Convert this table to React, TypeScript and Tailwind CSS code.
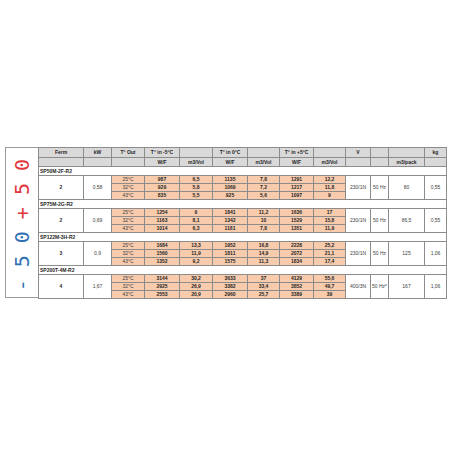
const blocks = [
  {
    name: "SP50M-2F-R2", ferm: "2", kw: "0,58", v: "230/1N", hz: "50 Hz", pack: "80", kg: "0,55",
    rows: [
      ["987", "6,5", "1135", "7,8", "1291", "12,2"],
      ["929", "5,8", "1069", "7,2", "1217", "11,8"],
      ["835", "5,5", "925", "5,6", "1097", "9"],
    ],
  },
  {
    name: "SP75M-2G-R2", ferm: "2", kw: "0,69", v: "230/1N", hz: "50 Hz", pack: "86,5", kg: "0,55",
    rows: [
      ["1254", "9", "1841", "11,2", "1636", "17"],
      ["1163", "8,1", "1342", "10", "1529", "15,8"],
      ["1014", "6,3", "1181", "7,8", "1351", "11,9"],
    ],
  },
  {
    name: "SP122M-3H-R2", ferm: "3", kw: "0,9", v: "230/1N", hz: "50 Hz", pack: "125", kg: "1,06",
    rows: [
      ["1684", "13,3", "1952", "16,8", "2228", "25,2"],
      ["1560", "11,9", "1811", "14,9", "2072", "21,1"],
      ["1352", "9,2", "1575", "11,3", "1834", "17,4"],
    ],
  },
  {
    name: "SP200T-4M-R2", ferm: "4", kw: "1,67", v: "400/3N", hz: "50 Hz*", pack: "167", kg: "1,06",
    rows: [
      ["3144", "30,2", "3633", "37", "4129", "55,6"],
      ["2925", "26,9", "3382", "33,4", "3852", "49,7"],
      ["2553", "20,9", "2960", "25,7", "3389", "39"],
    ],
  },
];

const temps = ["25°C", "32°C", "43°C"];
const widths = [45, 28, 33, 35, 33, 35, 32, 34, 32, 25, 18, 36, 22];

const hd = "border border-[#8c8c8c] bg-[#d9d9d9] text-[#262626] font-bold text-center p-0";
const cell = "border border-[#8c8c8c] text-center p-0";
const salmon = "border border-[#8c8c8c] bg-[#f8cbad] text-center p-0 text-[#262626]";

export default function App() {
  return (
    <div className="w-[450px] h-[450px] bg-white pt-[147px] pl-[5px] flex items-start font-['Liberation_Sans',Arial,sans-serif]">
      <div className="w-[33px] h-[151px] border border-[#9a9a9a] border-r-0 flex items-center justify-center">
        <div className="[writing-mode:vertical-rl] rotate-180 font-['DejaVu_Sans_Mono',monospace] text-[20px] leading-none tracking-[12px] pt-[6px]">
          <span className="text-[#2f6fb3]">-50</span>
          <span className="text-[#e0353c]">+50</span>
        </div>
      </div>
      <table className="table-fixed border-collapse w-[408px] text-[5px] leading-none border border-[#8c8c8c]">
        <colgroup>
          {widths.map((w, i) => (
            <col key={i} style={{ width: w }} />
          ))}
        </colgroup>
        <tbody>
          <tr className="h-[10px]">
            <td className={hd}>Ferm</td>
            <td className={hd}>kW</td>
            <td className={hd}>T° Out</td>
            <td className={hd}>T° in -5°C</td>
            <td className={hd}></td>
            <td className={hd}>T° in 0°C</td>
            <td className={hd}></td>
            <td className={hd}>T° in +5°C</td>
            <td className={hd}></td>
            <td className={hd}>V</td>
            <td className={hd}></td>
            <td className={hd}></td>
            <td className={hd}>kg</td>
          </tr>
          <tr className="h-[9px]">
            <td className={hd}></td>
            <td className={hd}></td>
            <td className={hd}></td>
            <td className={hd}>W/F</td>
            <td className={hd}>m3/Vol</td>
            <td className={hd}>W/F</td>
            <td className={hd}>m3/Vol</td>
            <td className={hd}>W/F</td>
            <td className={hd}>m3/Vol</td>
            <td className={hd}></td>
            <td className={hd}></td>
            <td className={hd}>m3/pack</td>
            <td className={hd}></td>
          </tr>
          {blocks.map((b) => [
            <tr key={b.name} className="h-[9px]">
              <td colSpan={13} className="p-0 pl-[1px] font-bold text-[#262626] border-b border-[#8c8c8c] border-l border-r">
                {b.name}
              </td>
            </tr>,
            ...b.rows.map((r, i) => (
              <tr key={b.name + i} className="h-[8px]">
                {i === 0 && (
                  <>
                    <td rowSpan={3} className={cell + " font-bold text-[#262626]"}>{b.ferm}</td>
                    <td rowSpan={3} className={cell + " text-[#404040]"}>{b.kw}</td>
                  </>
                )}
                <td className={salmon + " font-normal text-[#404040]"}>{temps[i]}</td>
                {r.map((v, j) => (
                  <td key={j} className={salmon + " font-bold"}>{v}</td>
                ))}
                {i === 0 && (
                  <>
                    <td rowSpan={3} className={cell + " text-[#404040]"}>{b.v}</td>
                    <td rowSpan={3} className={cell + " text-[#404040]"}>{b.hz}</td>
                    <td rowSpan={3} className={cell + " text-[#404040]"}>{b.pack}</td>
                    <td rowSpan={3} className={cell + " text-[#404040]"}>{b.kg}</td>
                  </>
                )}
              </tr>
            )),
          ])}
        </tbody>
      </table>
    </div>
  );
}
